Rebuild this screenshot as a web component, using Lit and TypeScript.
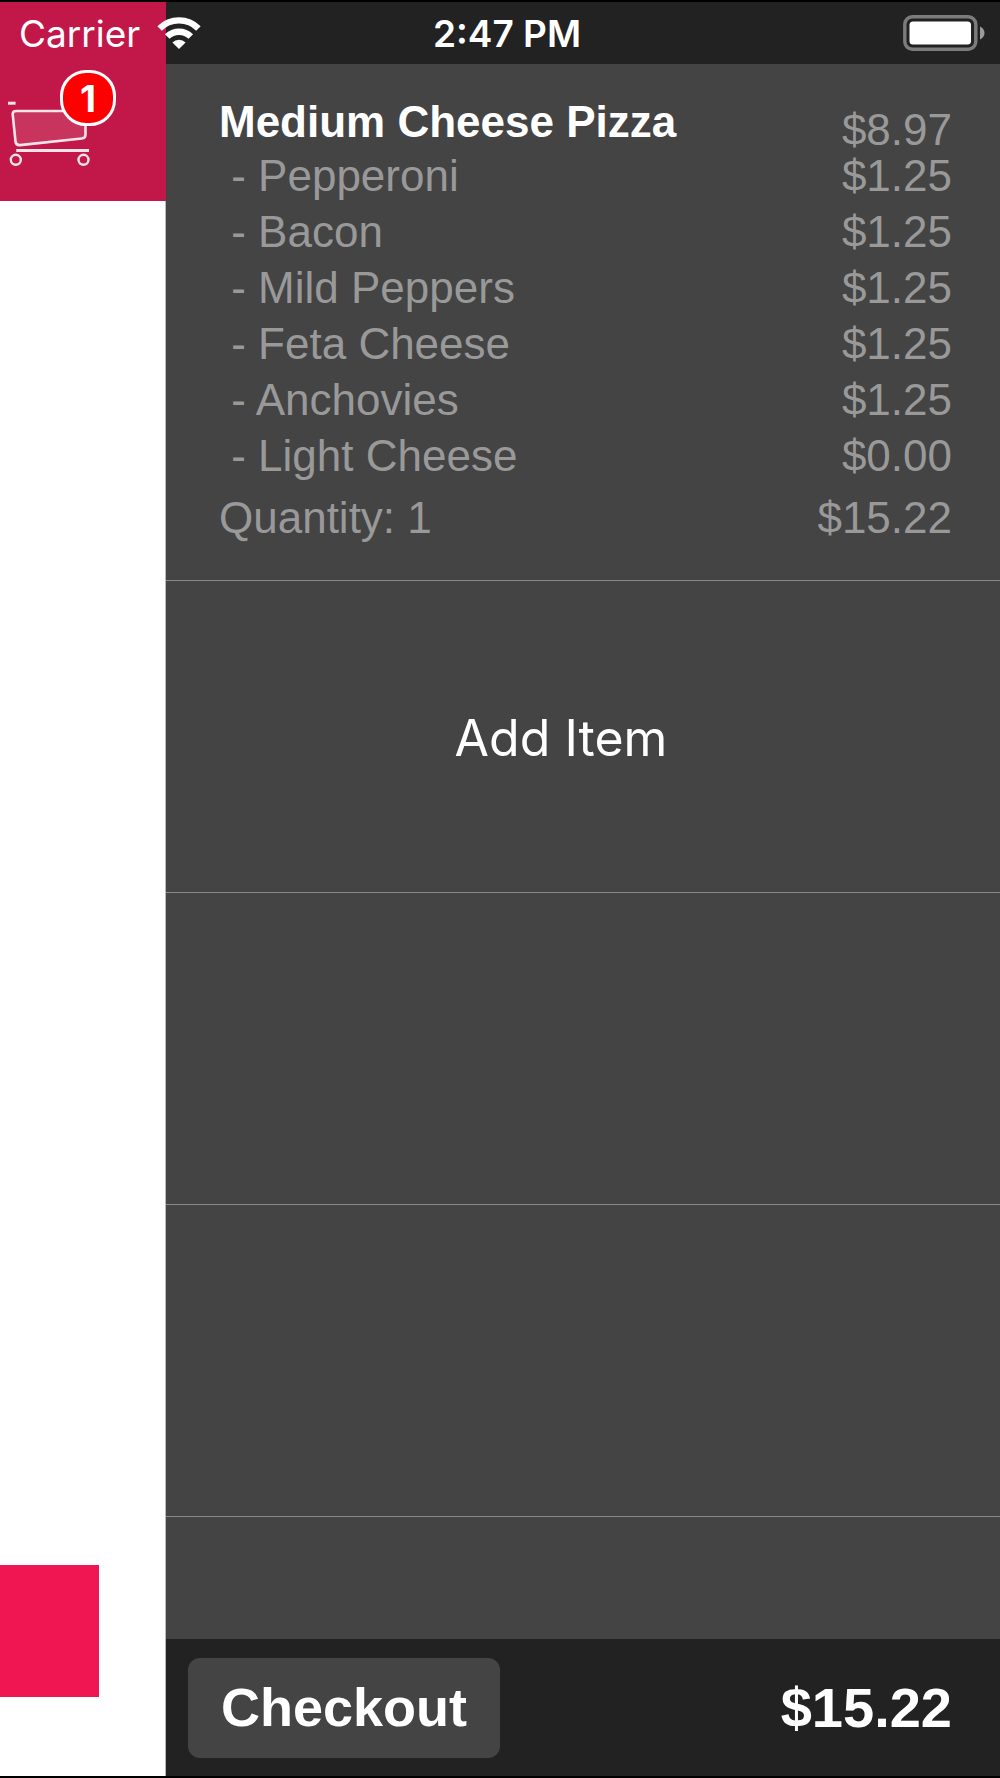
import { LitElement, html, css } from "lit";
import { customElement, property } from "lit/decorators.js";

interface Line {
  name: string;
  price: string;
}

const OPTIONS: Line[] = [
  { name: "Pepperoni", price: "$1.25" },
  { name: "Bacon", price: "$1.25" },
  { name: "Mild Peppers", price: "$1.25" },
  { name: "Feta Cheese", price: "$1.25" },
  { name: "Anchovies", price: "$1.25" },
  { name: "Light Cheese", price: "$0.00" },
];

@customElement("status-bar")
export class StatusBar extends LitElement {
  static styles = css`
    :host {
      display: grid;
      grid-template-columns: 1fr auto 1fr;
      align-items: center;
      height: 62px;
      box-sizing: border-box;
      padding: 0 15px 0 19px;
      color: #fff;
      font: 400 37px/60px Inter, "Liberation Sans", sans-serif;
    }
    .network {
      display: flex;
      align-items: center;
      gap: 17px;
    }
    .label {
      padding-top: 2px;
    }
    .clock {
      padding: 2px 0 0 10px;
      font-weight: 600;
    }
    .battery {
      justify-self: end;
    }
    svg {
      display: block;
    }
  `;

  render() {
    return html`
      <div class="network">
        <span class="label">Carrier</span>
        <svg width="44" height="32" viewBox="0 0 44 32" role="img" aria-label="Wi-Fi">
          <g fill="none" stroke="#fff" stroke-width="6.4">
            <path d="M2.6 11.4a27.4 27.4 0 0 1 38.8 0" />
            <path d="M10.2 19.6a16.7 16.7 0 0 1 23.6 0" />
          </g>
          <path d="M22 32l-6.6-6.6a9.4 9.4 0 0 1 13.2 0z" fill="#fff" />
        </svg>
      </div>
      <span class="clock">2:47 PM</span>
      <svg class="battery" width="82" height="36" viewBox="0 0 82 36" role="img" aria-label="Battery full">
        <rect x="1.8" y="1.8" width="71" height="32.4" rx="7.5" fill="none" stroke="#7c7c7c" stroke-width="3.4" />
        <rect x="6.5" y="6.5" width="61.5" height="23" rx="3.5" fill="#fff" />
        <path d="M77 11.5c6 2.8 6 10.2 0 13z" fill="#9a9a9a" />
      </svg>
    `;
  }
}

@customElement("cart-button")
export class CartButton extends LitElement {
  @property({ type: Number }) count = 0;

  static styles = css`
    .cart {
      position: relative;
      display: block;
      border: 0;
      padding: 0;
      background: none;
    }
    svg {
      display: block;
    }
    .badge {
      position: absolute;
      top: 0;
      left: 52px;
      width: 56px;
      height: 56px;
      box-sizing: border-box;
      border: 3px solid #fff;
      border-radius: 26px;
      background: #f00;
      color: #fff;
      font: 700 37px/52px Inter, "Liberation Sans", sans-serif;
      text-align: center;
    }
  `;

  render() {
    return html`
      <button class="cart" aria-label="Cart">
        <svg width="108" height="98" viewBox="8 69.5 108 98" fill="none" stroke="#fff" stroke-opacity=".88">
          <path d="M8 102.7H15.6" stroke-width="3" />
          <path
            d="M16 110.5H82q3.5 0 3.5 3.5V134q0 3.6-3.6 4L20 144.6q-4 .4-4.5-3.6L12.7 114q-.2-3.5 3.3-3.5z"
            fill="#fff"
            fill-opacity=".12"
            stroke-width="2.6"
          />
          <path d="M16.3 150H89" stroke-width="3.2" />
          <circle cx="15.8" cy="159.3" r="5" stroke-width="2.4" />
          <circle cx="83.5" cy="159.3" r="5" stroke-width="2.4" />
        </svg>
        <span class="badge">${this.count}</span>
      </button>
    `;
  }
}

@customElement("app-root")
export class AppRoot extends LitElement {
  static styles = css`
    :host {
      display: block;
    }
    .screen {
      position: relative;
      display: grid;
      grid-template-columns: 166fr 834fr;
      min-height: 100vh;
      box-sizing: border-box;
      border: solid #000;
      border-width: 2px 0;
      font-family: "Liberation Sans", Arial, sans-serif;
    }
    .status {
      position: absolute;
      top: 0;
      left: 0;
      right: 0;
    }
    .menu {
      display: flex;
      flex-direction: column;
      justify-content: space-between;
      background: #fff;
      box-shadow: inset -1px 0 #bbb;
      min-width: 0;
    }
    .menu-head {
      height: 199px;
      box-sizing: border-box;
      padding: 68px 0 0 8px;
      background: #c21849;
    }
    .menu-block {
      width: 99px;
      height: 132px;
      margin-bottom: 79px;
      background: #ef1651;
    }
    .order {
      display: flex;
      flex-direction: column;
      background: #444;
      min-width: 0;
    }
    .order-top {
      height: 62px;
      background: #222;
    }
    .item {
      display: flex;
      flex-direction: column;
      padding: 36px 48px 40px 53px;
      border-bottom: 1px solid #888;
      color: #999;
      font-size: 44px;
      line-height: 44px;
    }
    .row {
      display: flex;
      justify-content: space-between;
      white-space: pre;
    }
    .title {
      margin: 0;
      color: #fff;
      font-size: 44px;
      font-weight: 700;
    }
    .base-price {
      padding-top: 8px;
    }
    .options {
      display: flex;
      flex-direction: column;
      gap: 12px;
      margin: 2px 0 18px;
      padding: 0;
      list-style: none;
    }
    .cell {
      height: 312px;
      box-sizing: border-box;
      border: 0;
      border-bottom: 1px solid #888;
      background: none;
    }
    .add {
      padding: 2px 44px 0 0;
      color: #fff;
      font: 400 50px/60px Inter, "Liberation Sans", sans-serif;
    }
    .footer {
      display: flex;
      align-items: center;
      justify-content: space-between;
      margin-top: auto;
      padding: 19px 48px 18px 22px;
      background: #222;
      color: #fff;
      font-size: 56px;
      font-weight: 700;
    }
    .total {
      padding-bottom: 2px;
    }
    .checkout {
      padding: 19px 33px 21px;
      border: 0;
      border-radius: 12px;
      background: #444;
      color: #fff;
      font: 700 54px/60px "Liberation Sans", Arial, sans-serif;
    }
  `;

  render() {
    return html`
      <div class="screen">
        <aside class="menu">
          <div class="menu-head"><cart-button count="1"></cart-button></div>
          <div class="menu-block"></div>
        </aside>
        <main class="order">
          <div class="order-top"></div>
          <section class="item">
            <div class="row"><h1 class="title">Medium Cheese Pizza</h1><span class="base-price">$8.97</span></div>
            <ul class="options">
              ${OPTIONS.map(
                (o) => html`<li class="row"><span> - ${o.name}</span><span>${o.price}</span></li>`
              )}
            </ul>
            <div class="row"><span>Quantity: 1</span><span>$15.22</span></div>
          </section>
          <button class="cell add">Add Item</button>
          <div class="cell"></div>
          <div class="cell"></div>
          <footer class="footer">
            <button class="checkout">Checkout</button>
            <span class="total">$15.22</span>
          </footer>
        </main>
        <status-bar class="status"></status-bar>
      </div>
    `;
  }
}
